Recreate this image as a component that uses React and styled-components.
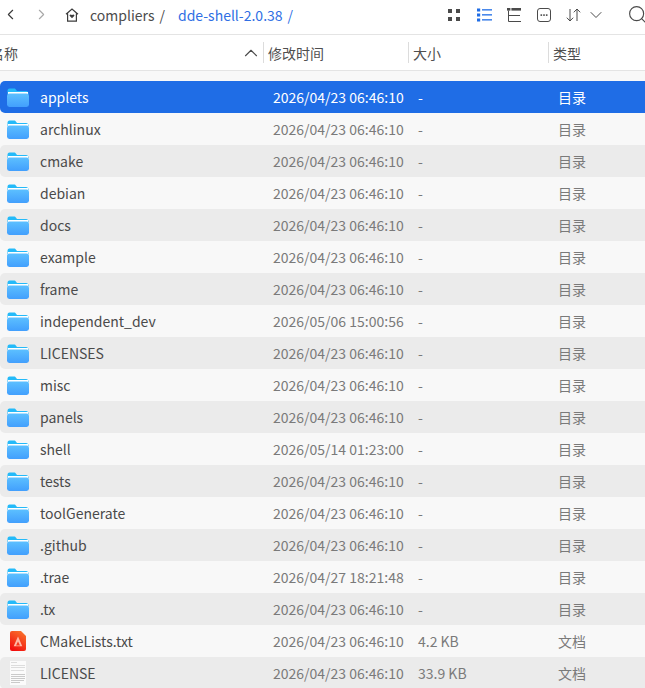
import React from "react";
import styled, { createGlobalStyle } from "styled-components";
import { ChevronLeft, ChevronRight, ChevronDown, ChevronUp, Search } from "lucide-react";

const GlobalStyle = createGlobalStyle`
  html, body {
    margin: 0;
    padding: 0;
    background: #f8f8f8;
  }
  body {
    font-family: "Noto Sans CJK SC", "Noto Sans", sans-serif;
  }
`;

const files = [
  { name: "applets", time: "2026/04/23 06:46:10" },
  { name: "archlinux", time: "2026/04/23 06:46:10" },
  { name: "cmake", time: "2026/04/23 06:46:10" },
  { name: "debian", time: "2026/04/23 06:46:10" },
  { name: "docs", time: "2026/04/23 06:46:10" },
  { name: "example", time: "2026/04/23 06:46:10" },
  { name: "frame", time: "2026/04/23 06:46:10" },
  { name: "independent_dev", time: "2026/05/06 15:00:56" },
  { name: "LICENSES", time: "2026/04/23 06:46:10" },
  { name: "misc", time: "2026/04/23 06:46:10" },
  { name: "panels", time: "2026/04/23 06:46:10" },
  { name: "shell", time: "2026/05/14 01:23:00" },
  { name: "tests", time: "2026/04/23 06:46:10" },
  { name: "toolGenerate", time: "2026/04/23 06:46:10" },
  { name: ".github", time: "2026/04/23 06:46:10" },
  { name: ".trae", time: "2026/04/27 18:21:48" },
  { name: ".tx", time: "2026/04/23 06:46:10" },
  { name: "CMakeLists.txt", time: "2026/04/23 06:46:10", size: "4.2 KB", type: "文档", icon: "cmake" },
  { name: "LICENSE", time: "2026/04/23 06:46:10", size: "33.9 KB", type: "文档", icon: "doc" },
];

const FolderIcon = ({ id }) => (
  <svg width="22" height="19" viewBox="0 0 22 19">
    <defs>
      <linearGradient id={id} x1="0" y1="0" x2="0" y2="1">
        <stop offset="0" stopColor="#5cc0ff" />
        <stop offset="1" stopColor="#429ffd" />
      </linearGradient>
    </defs>
    <path d="M0.5 3C0.5 1.5 1.2 .5 2.5 .5h4.5c1 0 1.5.5 2 1.2L10 3h9c1.5 0 2.5 1 2.5 2.5V6H.5z" fill="#24baf9" />
    <rect x="1" y="4" width="20" height="2" fill="#ffffff" />
    <rect x="0" y="5.5" width="22" height="13.5" rx="2.4" fill={`url(#${id})`} />
  </svg>
);

const CmakeIcon = () => (
  <svg width="16" height="20" viewBox="0 0 16 20">
    <defs>
      <linearGradient id="cmake-body" x1="0.8" y1="0" x2="0.3" y2="1">
        <stop offset="0" stopColor="#f9732c" />
        <stop offset="1" stopColor="#f20d0d" />
      </linearGradient>
    </defs>
    <path d="M2 0h9l5 5v13a2 2 0 0 1-2 2H2a2 2 0 0 1-2-2V2a2 2 0 0 1 2-2z" fill="url(#cmake-body)" />
    <path d="M8 5.5l4.3 9.8H3.7z" fill="#ffb8a6" />
    <path d="M8 10.5l2 4H6z" fill="#f4381c" />
  </svg>
);

const DocIcon = () => (
  <svg width="16" height="24" viewBox="0 0 16 24">
    <rect width="16" height="24" fill="#fbfbfb" />
    <g stroke="#d6d6d6" strokeWidth="0.8">
      <path d="M1 1.5h6M1 4.5h14M1 6.5h14M1 9.5h13" />
    </g>
    <g stroke="#c4c4c4" strokeWidth="0.9">
      <path d="M1 13.5h14M1 15.5h14M1 17.5h14M1 19.5h13M1 21.5h9" />
    </g>
  </svg>
);

const ViewGridIcon = () => (
  <svg width="14" height="14" viewBox="0 0 14 14" fill="#4a4a4a">
    <rect x="1" y="1" width="4" height="4" />
    <rect x="9" y="1" width="4" height="4" />
    <rect x="1" y="9" width="4" height="4" />
    <rect x="9" y="9" width="4" height="4" />
  </svg>
);

const ViewListIcon = () => (
  <svg width="15" height="14" viewBox="0 0 15 14" fill="#1f6de6">
    <rect x="0" y="0.5" width="3.2" height="3" />
    <rect x="0" y="5.5" width="3.2" height="3" />
    <rect x="0" y="10.5" width="3.2" height="3" />
    <rect x="5" y="1.2" width="10" height="1.3" />
    <rect x="5" y="6.2" width="10" height="1.3" />
    <rect x="5" y="11.2" width="10" height="1.3" />
  </svg>
);

const ViewTreeIcon = () => (
  <svg width="14" height="14" viewBox="0 0 14 14">
    <rect x="0" y="0" width="3.4" height="2.6" fill="#4a4a4a" />
    <rect x="4.4" y="0" width="9.6" height="2.6" fill="#4a4a4a" />
    <path d="M1.5 2.5V13.5H14M1.5 7.5H13" fill="none" stroke="#4a4a4a" strokeWidth="1" />
  </svg>
);

const MoreIcon = () => (
  <svg width="14" height="14" viewBox="0 0 14 14">
    <rect x="0.5" y="0.5" width="13" height="13" rx="2.5" fill="none" stroke="#4a4a4a" strokeWidth="1" />
    <rect x="3.5" y="6.3" width="1.6" height="1.6" fill="#4a4a4a" />
    <rect x="6.2" y="6.3" width="1.6" height="1.6" fill="#4a4a4a" />
    <rect x="8.9" y="6.3" width="1.6" height="1.6" fill="#4a4a4a" />
  </svg>
);

const SortIcon = () => (
  <svg width="15" height="14" viewBox="0 0 15 14" fill="none" stroke="#4a4a4a" strokeWidth="1">
    <path d="M4 1v12M0.8 9.7L4 13l3.2-3.3M11 13V1M7.8 4.3L11 1l3.2 3.3" />
  </svg>
);

const HomeIcon = () => (
  <svg width="14" height="14" viewBox="0 0 14 14">
    <path d="M1 6.2L7 1l6 5.2M2.6 5.5v7.7h8.8V5.5" fill="none" stroke="#3c3c3c" strokeWidth="1.2" />
    <path d="M7 10.3L4.8 8.1c-.9-1.2.9-2.4 2.2-1 1.3-1.4 3.1-.2 2.2 1z" fill="#3c3c3c" />
  </svg>
);

const App = () => (
  <>
    <GlobalStyle />
    <Window>
      <Toolbar>
        <NavButton>
          <ChevronLeft size={17} color="#3a3a3a" strokeWidth={1.6} />
        </NavButton>
        <NavButton $disabled>
          <ChevronRight size={17} color="#a8a8a8" strokeWidth={1.6} />
        </NavButton>
        <Breadcrumb>
          <HomeIcon />
          <Crumb>compliers</Crumb>
          <Slash>/</Slash>
          <Crumb $active>dde-shell-2.0.38</Crumb>
          <Slash $active>/</Slash>
        </Breadcrumb>
        <Actions>
          <ViewGridIcon />
          <ViewListIcon />
          <ViewTreeIcon />
          <MoreIcon />
          <SortGroup>
            <SortIcon />
            <ChevronDown size={20} color="#4a4a4a" strokeWidth={1.2} />
          </SortGroup>
          <SearchWrap>
            <Search size={21} color="#4a4a4a" strokeWidth={1.3} />
          </SearchWrap>
        </Actions>
      </Toolbar>
      <Header>
        <HeaderCell>
          <NameLabel>名称</NameLabel>
          <ChevronUp size={22} color="#4a4a4a" strokeWidth={1.2} />
        </HeaderCell>
        <HeaderCell $divider>修改时间</HeaderCell>
        <HeaderCell $divider>大小</HeaderCell>
        <HeaderCell $divider>类型</HeaderCell>
      </Header>
      <List>
        {files.map((file, i) => (
          <Row key={file.name} $selected={i === 0} $striped={i % 2 === 0}>
            <NameCell>
              <IconSlot $file={!!file.icon}>
                {file.icon === "cmake" ? (
                  <CmakeIcon />
                ) : file.icon === "doc" ? (
                  <DocIcon />
                ) : (
                  <FolderIcon id={`folder-${i}`} />
                )}
              </IconSlot>
              <FileName $selected={i === 0}>{file.name}</FileName>
            </NameCell>
            <MetaCell $selected={i === 0}>{file.time}</MetaCell>
            <MetaCell $selected={i === 0}>{file.size || "-"}</MetaCell>
            <MetaCell $selected={i === 0}>{file.type || "目录"}</MetaCell>
          </Row>
        ))}
      </List>
    </Window>
  </>
);

export default App;

const Window = styled.div`
  width: 645px;
  height: 688px;
  overflow: hidden;
  background: #f8f8f8;
`;

const Toolbar = styled.div`
  display: flex;
  align-items: center;
  background: #fff;
  padding-left: 2px;
  padding-bottom: 5px;
  height: 29px;
`;

const NavButton = styled.div`
  width: 17px;
  height: 17px;
  margin-right: 14px;
  display: flex;
`;

const Breadcrumb = styled.div`
  display: flex;
  align-items: center;
  margin-left: 1px;
  width: 382px;
  flex: none;
  svg {
    margin-right: 11px;
  }
`;

const Crumb = styled.span`
  font-size: 14px;
  color: ${(p) => (p.$active ? "#2f6fe4" : "#4c4c4c")};
`;

const Slash = styled.span`
  font-size: 14px;
  margin-left: 5px;
  margin-right: ${(p) => (p.$active ? "0" : "13px")};
  color: ${(p) => (p.$active ? "#2f6fe4" : "#4c4c4c")};
`;

const Actions = styled.div`
  display: flex;
  align-items: center;
  gap: 15.5px;
  flex: none;
`;

const SortGroup = styled.div`
  display: flex;
  align-items: center;
  gap: 5px;
`;

const SearchWrap = styled.div`
  display: flex;
  margin-left: 5px;
`;

const Header = styled.div`
  display: grid;
  grid-template-columns: 263px 145px 140px 97px;
  height: 35px;
  align-items: center;
  background: #fff;
  border-top: 1px solid #e4e4e4;
  border-bottom: 1px solid #e4e4e4;
`;

const HeaderCell = styled.div`
  display: flex;
  align-items: center;
  justify-content: space-between;
  height: 21px;
  font-size: 14px;
  color: #4f4f4f;
  padding-left: ${(p) => (p.$divider ? "4px" : "0")};
  padding-right: ${(p) => (p.$divider ? "0" : "1.5px")};
  border-left: ${(p) => (p.$divider ? "1px solid #dcdcdc" : "none")};
`;

const NameLabel = styled.span`
  margin-left: -10px;
`;

const List = styled.div`
  padding-top: 10px;
`;

const Row = styled.div`
  display: grid;
  grid-template-columns: 273px 145px 140px 102px;
  width: 660px;
  height: 32px;
  align-items: center;
  border-radius: 5px;
  background: ${(p) => (p.$selected ? "#1f6de6" : p.$striped ? "#ebebeb" : "#f8f8f8")};
`;

const NameCell = styled.div`
  display: flex;
  align-items: center;
`;

const IconSlot = styled.div`
  width: 40px;
  flex: none;
  padding-left: ${(p) => (p.$file ? "10px" : "7px")};
  box-sizing: border-box;
  display: flex;
  align-items: center;
`;

const FileName = styled.span`
  font-size: 14px;
  color: ${(p) => (p.$selected ? "#fff" : "#4a4a4a")};
`;

const MetaCell = styled.div`
  font-size: 14px;
  color: ${(p) => (p.$selected ? "#fff" : "#7a7a7a")};
`;
